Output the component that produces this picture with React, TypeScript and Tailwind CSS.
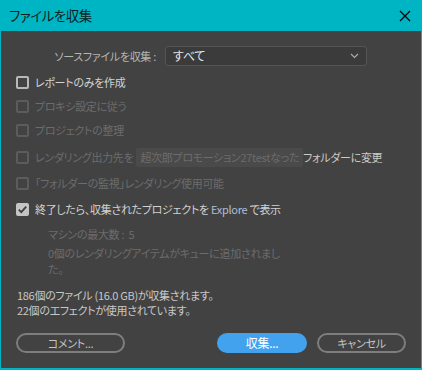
import React from "react";

const font = {
  fontFamily: '"Noto Sans CJK JP", "Noto Sans", sans-serif',
};

interface CheckRowProps {
  label: React.ReactNode;
  checked?: boolean;
  disabled?: boolean;
  className?: string;
}

const CheckBox = ({ checked, disabled }: { checked?: boolean; disabled?: boolean }) => {
  if (checked) {
    return (
      <div className="w-[13px] h-[13px] rounded-[2px] bg-[#c4c4c4] flex items-center justify-center shrink-0">
        <svg width="11" height="11" viewBox="0 0 11 11">
          <path d="M1.8 5.6 L4.3 8.1 L9.2 2.6" fill="none" stroke="#3e3e3e" strokeWidth="1.8" />
        </svg>
      </div>
    );
  }
  return (
    <div
      className={`w-[13px] h-[13px] rounded-[2px] border-2 shrink-0 ${
        disabled ? "border-[#5c5c5c]" : "border-[#b8b8b8]"
      }`}
    />
  );
};

const CheckRow = ({ label, checked, disabled, className }: CheckRowProps) => (
  <div className={`flex items-center gap-[6px] whitespace-nowrap ${className ?? ""}`}>
    <CheckBox checked={checked} disabled={disabled} />
    <div className={disabled ? "text-[#6c6c6c]" : "text-[#d2d2d2]"}>{label}</div>
  </div>
);

export default function App() {
  return (
    <div
      style={font}
      className="w-[422px] h-[370px] bg-[#00b5c3] flex flex-col [font-feature-settings:'palt'] text-[11px] leading-none tracking-[-0.3px]"
    >
      <div className="h-[31px] flex items-center justify-between pl-[9px] pr-[11px] shrink-0">
        <div className="text-[13.5px] text-[#0b1f22] tracking-[-0.5px]">ファイルを収集</div>
        <svg width="12" height="12" viewBox="0 0 12 12">
          <path d="M1 1 L11 11 M11 1 L1 11" stroke="#000" strokeWidth="1.3" />
        </svg>
      </div>

      <div className="flex-1 mx-[1px] mb-[2px] bg-[#424242] flex flex-col px-[15px]">
        <div className="mt-[15px] flex items-center h-[20px]">
          <div className="w-[142px] text-right text-[#b4b4b4] pr-[2px]">ソースファイルを収集 :</div>
          <div className="ml-[7px] w-[202px] h-[20px] rounded-[3px] border border-[#555] bg-[#3b3b3b] flex items-center justify-between pl-[7px] pr-[7px]">
            <span className="text-[#e6e6e6] text-[12px]">すべて</span>
            <svg width="9" height="6" viewBox="0 0 9 6">
              <path d="M1 1 L4.5 4.5 L8 1" fill="none" stroke="#aaa" strokeWidth="1.2" />
            </svg>
          </div>
        </div>

        <CheckRow className="mt-[10px] h-[13px]" label="レポートのみを作成" />
        <CheckRow className="mt-[11px] h-[13px]" disabled label="プロキシ設定に従う" />
        <CheckRow className="mt-[11px] h-[13px]" disabled label="プロジェクトの整理" />
        <CheckRow
          className="mt-[14px] h-[13px]"
          disabled
          label={
            <span className="flex items-center">
              <span>レンダリング出力先を</span>
              <span className="ml-[3px] h-[19px] px-[4px] bg-[#4a4a4a] rounded-[2px] flex items-center text-[#6c6c6c]">
                超次郎プロモーション27testなった
              </span>
              <span className="text-[#cacaca]">フォルダーに変更</span>
            </span>
          }
        />
        <CheckRow className="mt-[13px] h-[13px]" disabled label="「フォルダーの監視」レンダリング使用可能" />
        <CheckRow
          className="mt-[13px] h-[13px]"
          checked
          label={
            <span>
              終了したら、収集されたプロジェクトを <span className="text-[#aebfd6]">Explore</span> で表示
            </span>
          }
        />

        <div className="ml-[32px] mt-[13px] text-[#6c6c6c] flex flex-col gap-[5px] whitespace-nowrap">
          <div>マシンの最大数 :&nbsp; 5</div>
          <div className="leading-[16px]">
            0個のレンダリングアイテムがキューに追加されまし
            <br />
            た。
          </div>
        </div>

        <div className="mt-[11px] text-[#c8c8c8] leading-[15px] pl-[1px]">
          <div>186個のファイル (16.0 GB)が収集されます。</div>
          <div>22個のエフェクトが使用されています。</div>
        </div>

        <div className="mt-[15px] flex items-center">
          <button className="w-[109px] h-[20px] rounded-full border-2 border-[#7e7e7e] text-[#c4c4c4] flex items-center justify-center">
            コメント...
          </button>
          <div className="flex-1" />
          <button className="w-[90px] h-[20px] rounded-full bg-[#42a2ee] text-white flex items-center justify-center text-[12px]">
            収集...
          </button>
          <button className="ml-[10px] w-[89px] h-[20px] rounded-full border-2 border-[#7e7e7e] text-[#c4c4c4] flex items-center justify-center">
            キャンセル
          </button>
        </div>
      </div>
    </div>
  );
}
